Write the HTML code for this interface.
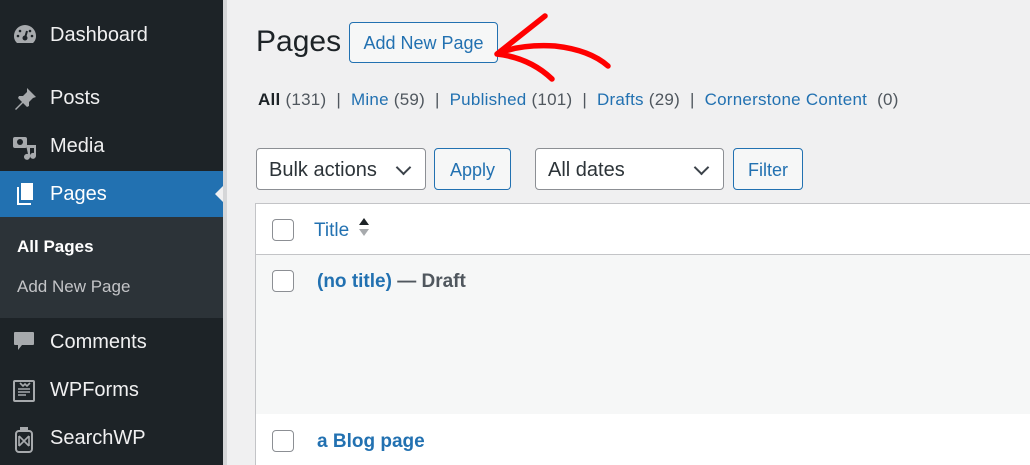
<!DOCTYPE html>
<html><head><style>
*{margin:0;padding:0;box-sizing:border-box}
html,body{width:1030px;height:465px;overflow:hidden}
body{background:#f0f0f1;font-family:"Liberation Sans",sans-serif;position:relative}
#sb{position:absolute;left:0;top:0;width:223px;height:465px;background:#1d2327}
.mi{position:absolute;left:0;width:223px;height:46px;color:#f0f0f1;font-size:20px;line-height:46px;padding-left:50px}
.mi svg{position:absolute;left:12px;top:11px}
#cur{background:#2271b1;color:#fff}
#sub{position:absolute;left:0;top:217px;width:223px;height:101px;background:#2c3338}
#sub div{position:absolute;left:17px;font-size:17px}
.ab{position:absolute}
.btn{position:absolute;border:1px solid #2271b1;border-radius:4px;color:#2271b1;background:#f6f7f7;text-align:center;font-size:18px}
.sel{position:absolute;border:1px solid #8c8f94;border-radius:4px;background:#fff;color:#2c3338;font-size:20px;padding-left:12px}
.sel:after{content:"";position:absolute;right:16px;top:13px;width:9px;height:9px;border-right:2px solid #3c434a;border-bottom:2px solid #3c434a;transform:rotate(45deg)}
.cb{position:absolute;width:22px;height:22px;border:1px solid #8c8f94;border-radius:4px;background:#fff;left:272px}
a{color:#2271b1;text-decoration:none}
</style></head><body>
<div id="sb">
 <div class="mi" style="top:12px"><svg width="26" height="24" viewBox="0 0 26 24"><path d="M13 2A11 11 0 0 0 2 13c0 3 1 5 3 7h16c2-2 3-4 3-7A11 11 0 0 0 13 2z" fill="#a7aaad"/><circle cx="13" cy="15" r="2.5" fill="#1d2327"/><path d="M13 15l2-7" stroke="#1d2327" stroke-width="2"/><circle cx="6" cy="13" r="1.3" fill="#1d2327"/><circle cx="8" cy="8" r="1.3" fill="#1d2327"/><circle cx="18" cy="8" r="1.3" fill="#1d2327"/><circle cx="20" cy="13" r="1.3" fill="#1d2327"/></svg>Dashboard</div>
 <div class="mi" style="top:75px"><svg width="26" height="26" viewBox="0 0 26 26"><path d="M15 2l9 9-3 1-4 4 0 4-2 1-4-4-7 7-1-1 7-7-4-4 1-2h4l4-4z" fill="#a7aaad"/></svg>Posts</div>
 <div class="mi" style="top:123px"><svg width="28" height="26" viewBox="0 0 28 26"><rect x="1" y="3" width="14" height="11" rx="2" fill="#a7aaad"/><circle cx="8" cy="8" r="3" fill="#1d2327"/><path d="M14 11h10v11a3 3 0 1 1-2-3v-5h-4v9a3 3 0 1 1-2-3z" fill="#a7aaad"/></svg>Media</div>
 <div class="mi" id="cur" style="top:171px"><svg width="26" height="26" viewBox="0 0 26 26"><path d="M5 5v18h14v-2H7V5z" fill="#fff"/><rect x="9" y="1" width="12" height="17" fill="#fff"/></svg>Pages<div style="position:absolute;right:0;top:15px;border:8px solid transparent;border-right-color:#f0f0f1"></div></div>
 <div id="sub"><div style="top:20px;color:#fff;font-weight:bold">All Pages</div><div style="top:60px;color:#c3c4c7">Add New Page</div></div>
 <div class="mi" style="top:319px"><svg width="26" height="26" viewBox="0 0 26 26"><path d="M3 2h18a1 1 0 0 1 1 1v11a1 1 0 0 1-1 1h-11l-4 5v-5H3a1 1 0 0 1-1-1V3a1 1 0 0 1 1-1z" fill="#a7aaad"/></svg>Comments</div>
 <div class="mi" style="top:367px"><svg width="26" height="26" viewBox="0 0 26 26"><rect x="2" y="3" width="20" height="20" rx="1" fill="none" stroke="#a7aaad" stroke-width="2"/><path d="M6 11h12M6 14h12M6 17h8M8 5l3 3 2-2 2 2 3-3" stroke="#a7aaad" stroke-width="1.6" fill="none"/></svg>WPForms</div>
 <div class="mi" style="top:415px"><svg width="26" height="28" viewBox="0 0 26 28"><rect x="8" y="1" width="8" height="4" fill="#a7aaad"/><rect x="4" y="5" width="16" height="21" rx="3" fill="none" stroke="#a7aaad" stroke-width="2"/><path d="M7 10l10 10M17 10L7 20M7 10v10M17 10v10" stroke="#a7aaad" stroke-width="1.6"/></svg>SearchWP</div>
</div>
<div class="ab" style="left:223px;top:0;width:4px;height:465px;background:#3c434a;opacity:.15"></div>

<div class="ab" style="left:256px;top:25px;font-size:30px;color:#1d2327">Pages</div>
<div class="btn" style="left:349px;top:22px;width:149px;height:41px;line-height:40px">Add New Page</div>
<svg class="ab" style="left:480px;top:8px" width="140" height="80" viewBox="480 8 140 80"><path d="M497 54Q520 44 555 46Q590 50 608 66M497 54L545 16M497 54Q530 58 552 79" stroke="#f00" stroke-width="5.5" fill="none" stroke-linecap="round"/></svg>

<div class="ab" style="left:258px;top:90px;font-size:17px;letter-spacing:.25px;color:#50575e;white-space:nowrap"><b style="color:#1d2327;font-weight:600">All</b> (131) &nbsp;| &nbsp;<a>Mine</a> (59) &nbsp;| &nbsp;<a>Published</a> (101) &nbsp;| &nbsp;<a>Drafts</a> (29) &nbsp;| &nbsp;<a>Cornerstone Content</a> &nbsp;(0)</div>

<div class="sel" style="left:256px;top:148px;width:170px;height:42px;line-height:42px">Bulk actions</div>
<div class="btn" style="left:434px;top:148px;width:77px;height:42px;line-height:42px">Apply</div>
<div class="sel" style="left:535px;top:148px;width:189px;height:42px;line-height:42px">All dates</div>
<div class="btn" style="left:733px;top:148px;width:70px;height:42px;line-height:42px">Filter</div>

<div class="ab" style="left:255px;top:203px;width:780px;height:265px;background:#fff;border:1px solid #c3c4c7"></div>
<div class="ab" style="left:256px;top:254px;width:780px;height:1px;background:#c3c4c7"></div>
<div class="ab" style="left:256px;top:255px;width:780px;height:159px;background:#f6f7f7"></div>
<div class="cb" style="top:219px"></div>
<div class="ab" style="left:314px;top:220px;font-size:19px;color:#2271b1">Title</div>
<div class="ab" style="left:359px;top:218px;border:5px solid transparent;border-bottom:7px solid #1d2327;border-top:0"></div>
<div class="ab" style="left:359px;top:229px;border:5px solid transparent;border-top:7px solid #a7aaad;border-bottom:0"></div>
<div class="cb" style="top:270px"></div>
<div class="ab" style="left:317px;top:271px;font-size:19px;font-weight:bold;color:#50575e"><a>(no title)</a> — Draft</div>
<div class="cb" style="top:430px"></div>
<div class="ab" style="left:317px;top:431px;font-size:19px;font-weight:bold"><a>a Blog page</a></div>
</body></html>
